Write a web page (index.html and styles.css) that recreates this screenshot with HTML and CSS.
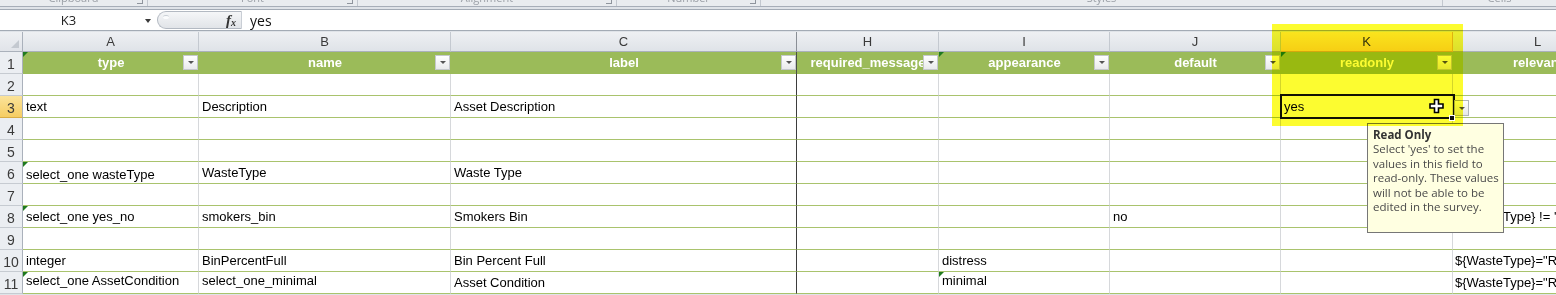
FILE: index.html
```html
<!DOCTYPE html>
<html>
<head>
<meta charset="utf-8">
<title>Sheet</title>
<link rel="stylesheet" href="styles.css">
</head>
<body>
<div class="app">
  <div class="ribbon">
    <div class="grp g1"><span>Clipboard</span><i class="launch"></i></div>
    <div class="grp g2"><span>Font</span><i class="launch"></i></div>
    <div class="grp g3"><span>Alignment</span><i class="launch"></i></div>
    <div class="grp g4"><span>Number</span><i class="launch"></i></div>
    <div class="grp g5"><span>Styles</span></div>
    <div class="grp g6"><span>Cells</span></div>
  </div>

  <div class="fbar">
    <div class="namebox"><span class="nb-text">K3</span><span class="nb-arrow"></span></div>
    <div class="fxzone"><span class="knob"></span><span class="fx"><i>f</i><sub>x</sub></span></div>
    <div class="finput">yes</div>
  </div>

  <div class="sheet">
    <!-- column headers -->
    <div class="corner"><span class="selall"></span></div>
    <div class="ch">A</div>
    <div class="ch">B</div>
    <div class="ch cc">C</div>
    <div class="ch">H</div>
    <div class="ch">I</div>
    <div class="ch">J</div>
    <div class="ch sel">K</div>
    <div class="ch">L</div>

    <!-- row 1 -->
    <div class="rh">1</div>
    <div class="h"><span class="tri"></span>type<span class="fb"></span></div>
    <div class="h">name<span class="fb"></span></div>
    <div class="h cc">label<span class="fb"></span></div>
    <div class="h">required_message<span class="fb"></span></div>
    <div class="h"><span class="tri"></span>appearance<span class="fb"></span></div>
    <div class="h">default<span class="fb"></span></div>
    <div class="h"><span class="tri"></span>readonly<span class="fb"></span></div>
    <div class="h">relevant<span class="fb"></span></div>

    <!-- row 2 -->
    <div class="rh">2</div>
    <div class="c"></div><div class="c"></div><div class="c cc"></div><div class="c"></div><div class="c"></div><div class="c"></div><div class="c"></div><div class="c"></div>

    <!-- row 3 -->
    <div class="rh sel">3</div>
    <div class="c">text</div>
    <div class="c">Description</div>
    <div class="c cc">Asset Description</div>
    <div class="c"></div>
    <div class="c"></div>
    <div class="c"></div>
    <div class="c">yes</div>
    <div class="c"></div>

    <!-- row 4 -->
    <div class="rh">4</div>
    <div class="c"></div><div class="c"></div><div class="c cc"></div><div class="c"></div><div class="c"></div><div class="c"></div><div class="c"></div><div class="c"></div>

    <!-- row 5 -->
    <div class="rh">5</div>
    <div class="c"></div><div class="c"></div><div class="c cc"></div><div class="c"></div><div class="c"></div><div class="c"></div><div class="c"></div><div class="c"></div>

    <!-- row 6 -->
    <div class="rh">6</div>
    <div class="c low"><span class="tri"></span>select_one wasteType</div>
    <div class="c">WasteType</div>
    <div class="c cc">Waste Type</div>
    <div class="c"></div><div class="c"></div><div class="c"></div><div class="c"></div><div class="c"></div>

    <!-- row 7 -->
    <div class="rh">7</div>
    <div class="c"></div><div class="c"></div><div class="c cc"></div><div class="c"></div><div class="c"></div><div class="c"></div><div class="c"></div><div class="c"></div>

    <!-- row 8 -->
    <div class="rh">8</div>
    <div class="c"><span class="tri"></span>select_one yes_no</div>
    <div class="c">smokers_bin</div>
    <div class="c cc">Smokers Bin</div>
    <div class="c"></div>
    <div class="c"></div>
    <div class="c">no</div>
    <div class="c"></div>
    <div class="c lc">${WasteType} != 'Recycling'</div>

    <!-- row 9 -->
    <div class="rh">9</div>
    <div class="c"></div><div class="c"></div><div class="c cc"></div><div class="c"></div><div class="c"></div><div class="c"></div><div class="c"></div><div class="c"></div>

    <!-- row 10 -->
    <div class="rh">10</div>
    <div class="c">integer</div>
    <div class="c">BinPercentFull</div>
    <div class="c cc">Bin Percent Full</div>
    <div class="c"></div>
    <div class="c">distress</div>
    <div class="c"></div>
    <div class="c"></div>
    <div class="c lc">${WasteType}="Recycling"</div>

    <!-- row 11 -->
    <div class="rh">11</div>
    <div class="c high"><span class="tri"></span>select_one AssetCondition</div>
    <div class="c high">select_one_minimal</div>
    <div class="c cc">Asset Condition</div>
    <div class="c"></div>
    <div class="c high"><span class="tri"></span>minimal</div>
    <div class="c"></div>
    <div class="c"></div>
    <div class="c lc">${WasteType}="Recycling"</div>
  </div>

  <!-- overlays -->
  <div class="selbox"></div>
  <div class="dvbtn"><span></span></div>
  <div class="tip">
    <b>Read Only</b><br>
    Select 'yes' to set the<br>
    values in this field to<br>
    read-only. These values<br>
    will not be able to be<br>
    edited in the survey.
  </div>
  <div class="hilite"></div>
  <div class="fillh"></div>
  <svg class="cursor" width="17" height="16" viewBox="0 0 17 16">
    <path d="M6.5 1.5h4v4.5h4.5v4h-4.5v4.5h-4v-4.5h-4.5v-4h4.5z" fill="#fff" stroke="#000" stroke-width="1.6" stroke-linejoin="miter"/>
  </svg>
</div>
</body>
</html>
```

FILE: styles.css
```css
* { box-sizing: border-box; margin: 0; padding: 0; }
html, body { width: 1556px; height: 295px; overflow: hidden; background: #fff; }
body { font-family: "Liberation Sans", Arial, sans-serif; font-size: 13px; color: #000; }

.app { position: relative; width: 1556px; height: 295px; overflow: hidden; background: #dfe3e8; }

/* ribbon remnant */
.ribbon { display: flex; height: 7px; background: #e9ecef; border-bottom: 1px solid #a7aeb8; overflow: hidden; }
.grp { position: relative; display: flex; justify-content: center; border-right: 1px solid #c3c8cf; height: 6px; overflow: hidden; }
.grp span { font-family: "Open Sans", sans-serif; font-size: 11px; line-height: 11px; margin-top: -8px; color: #9a9fa6; }
.g1 { width: 148px; }
.g2 { width: 210px; }
.g3 { width: 259px; }
.g4 { width: 144px; }
.g5 { width: 682px; }
.g6 { width: 113px; border-right: 0; }
.launch { position: absolute; right: 4px; top: 0; width: 6px; height: 4px; border-right: 1px solid #8f959d; border-bottom: 1px solid #8f959d; }

/* formula bar */
.fbar { display: flex; height: 22px; margin-top: 2px; margin-bottom: 1px; background: #fff; border-top: 1px solid #a3abb5; border-bottom: 1px solid #a3abb5; }
.namebox { position: relative; width: 157px; display: flex; align-items: center; }
.nb-text { width: 137px; text-align: center; font-family: "Open Sans", sans-serif; font-size: 13px; color: #222; }
.nb-arrow { position: absolute; left: 145px; top: 9px; width: 0; height: 0; border-left: 3.5px solid transparent; border-right: 3.5px solid transparent; border-top: 4px solid #3a3a3a; }
.fxzone { position: relative; width: 85px; margin: 1px 0; background: linear-gradient(#f5f6f8, #e1e4e8); border: 1px solid #b3b9c2; border-right-color: #c9ced5; border-radius: 10px 0 0 10px; display: flex; align-items: center; justify-content: flex-end; padding-right: 5px; }
.knob { position: absolute; left: 5px; top: 3px; width: 6px; height: 4px; border-radius: 50%; background: #fbfcfd; border-top: 1px solid #c7ccd3; }
.fx { font-family: "Liberation Serif", serif; font-size: 15px; font-weight: bold; color: #333; line-height: 1; }
.fx i { font-style: italic; }
.fx sub { font-size: 10px; font-style: italic; vertical-align: -1px; }
.finput { flex: 1; padding-left: 8px; display: flex; align-items: center; font-family: "Open Sans", sans-serif; font-size: 14px; color: #111; }

/* sheet grid */
.sheet { display: grid; grid-template-columns: 23px 176px 252px 346px 142px 171px 171px 172px 170px; grid-template-rows: 20px; grid-auto-rows: 22px; background: #fff; }

.corner { position: relative; background: linear-gradient(#eef0f3, #e1e4e9); border-right: 1px solid #aab1bb; border-bottom: 1px solid #aab1bb; }
.selall { position: absolute; right: 3px; bottom: 3px; width: 0; height: 0; border-left: 8px solid transparent; border-bottom: 8px solid #c4c9d0; }

.ch { background: linear-gradient(#eef0f3, #dfe3e8); border-right: 1px solid #c4c9d0; border-bottom: 1px solid #aab1bb; text-align: center; line-height: 19px; font-size: 13px; color: #3a3a3a; }
.ch.sel { background: linear-gradient(#fde79c, #f9d267); border-right-color: #e2b54a; border-bottom-color: #d8a93d; color: #333; }
.ch.cc { border-right-color: #8a8f96; }

.rh { background: #ebeef2; border-right: 1px solid #aab1bb; border-bottom: 1px solid #c6cbd1; display: flex; align-items: center; justify-content: center; padding-top: 3px; font-size: 14px; color: #3a3a3a; }
.rh.sel { background: linear-gradient(#fbe39a, #f6cd63); border-bottom-color: #d9ad45; }

.h { position: relative; background: #9bbb59; color: #fff; font-weight: bold; text-align: center; line-height: 22px; white-space: nowrap; overflow: hidden; }
.h.cc { box-shadow: inset -1px 0 0 #4a4f45; }

.c { position: relative; border-right: 1px solid #d6d8db; border-bottom: 1px solid #a9c36d; padding: 0 3px; line-height: 21px; white-space: nowrap; overflow: hidden; }
.c.cc { border-right-color: #3d3d3d; }
.c.lc { padding-left: 2px; }
.c.low { padding-top: 2px; }
.c.high { line-height: 17px; }

.tri { position: absolute; left: 0; top: 0; width: 0; height: 0; border-top: 5px solid #1f7a1f; border-right: 5px solid transparent; }

.fb { position: absolute; right: 1px; top: 3px; width: 15px; height: 15px; background: linear-gradient(#ffffff, #e9eaec); border: 1px solid #c5c8cc; }
.fb::after { content: ""; position: absolute; left: 4px; top: 5px; width: 0; height: 0; border-left: 3px solid transparent; border-right: 3px solid transparent; border-top: 3px solid #555; }

/* overlays */
.selbox { position: absolute; left: 1280px; top: 94px; width: 175px; height: 25px; border: 2px solid #111; }
.fillh { position: absolute; left: 1449px; top: 115px; width: 6px; height: 6px; background: #111; border: 1px solid #fff; }
.dvbtn { position: absolute; left: 1454px; top: 100px; width: 15px; height: 16px; background: linear-gradient(#ffffff, #e6e7e9); border: 1px solid #b0b5bc; }
.dvbtn span { position: absolute; left: 4px; top: 6px; width: 0; height: 0; border-left: 3px solid transparent; border-right: 3px solid transparent; border-top: 3px solid #555; }
.tip { position: absolute; left: 1367px; top: 123px; width: 137px; height: 110px; background: #ffffe1; border: 1px solid #767676; padding: 4px 5px; font-family: "Open Sans", sans-serif; font-size: 11.5px; line-height: 14.4px; color: #4a4a4a; white-space: nowrap; overflow: hidden; }
.tip b { color: #333; font-weight: bold; }
.hilite { position: absolute; left: 1272px; top: 24px; width: 191px; height: 102px; background: #fcfc30; mix-blend-mode: multiply; }
.cursor { position: absolute; left: 1428px; top: 98px; }
```
